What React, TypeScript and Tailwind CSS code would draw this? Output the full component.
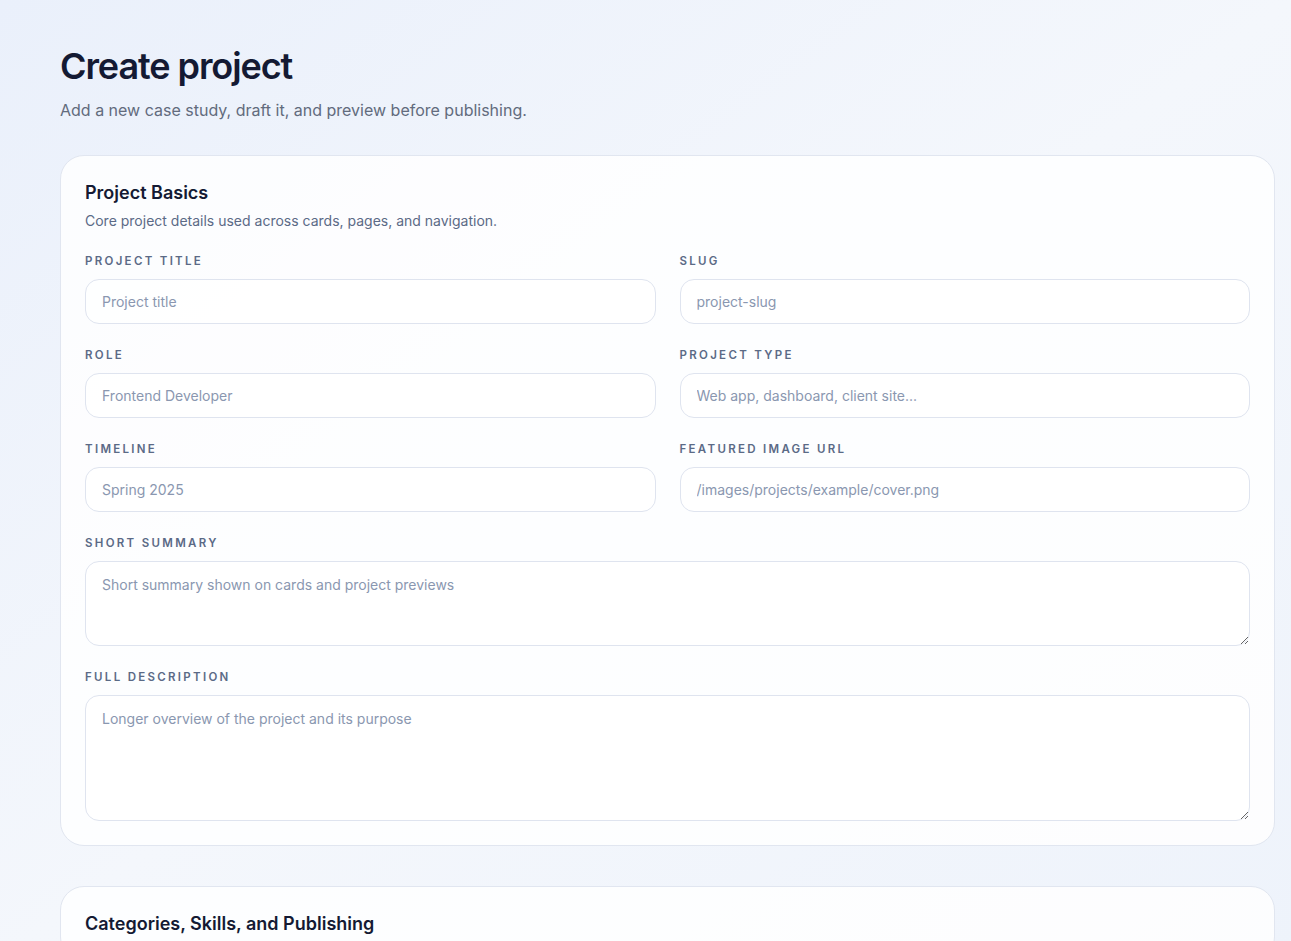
import React from 'react';

const inputCls =
    'w-full h-[45px] rounded-[14px] border border-[#dfe4ef] bg-white/80 px-4 text-[14px] text-slate-700 placeholder:text-[#8a97b0] outline-none';
const areaCls =
    'w-full rounded-[14px] border border-[#dfe4ef] bg-white/80 px-4 py-3 text-[14px] text-slate-700 placeholder:text-[#8a97b0] outline-none block';

const Field: React.FC<{ label: string; children: React.ReactNode; full?: boolean }> = ({ label, children, full }) => (
    <div className={`flex flex-col gap-[10px] ${full ? 'col-span-2' : ''}`}>
        <label className="text-[11.5px] font-semibold tracking-[0.2em] uppercase text-[#5b6a86] leading-4">{label}</label>
        {children}
    </div>
);

const App: React.FC = () => {
    return (
        <div
            className="min-h-[941px] bg-gradient-to-br from-[#eaf0fb] via-[#f4f7fc] to-[#eef3fb] pl-[60px] pr-4 pt-[44px] text-slate-900 overflow-hidden"
            style={{ fontFamily: 'Inter, "Noto Sans", sans-serif' }}
        >
            <h1 className="text-[36px] font-semibold tracking-[-0.03em] text-[#141a33] leading-[44px]">Create project</h1>
            <p className="mt-[10px] text-[16px] text-[#626b7d]">Add a new case study, draft it, and preview before publishing.</p>

            <section className="mt-[33px] rounded-[24px] border border-[#e1e6f0] bg-white/85 px-6 pt-[25px] pb-6">
                <h2 className="text-[18px] font-semibold text-[#141a33] leading-6">Project Basics</h2>
                <p className="mt-[5px] text-[14px] text-[#5b6a86]">Core project details used across cards, pages, and navigation.</p>

                <div className="mt-[22px] grid grid-cols-2 gap-x-6 gap-y-[23px]">
                    <Field label="Project title">
                        <input className={inputCls} placeholder="Project title" />
                    </Field>
                    <Field label="Slug">
                        <input className={inputCls} placeholder="project-slug" />
                    </Field>
                    <Field label="Role">
                        <input className={inputCls} placeholder="Frontend Developer" />
                    </Field>
                    <Field label="Project type">
                        <input className={inputCls} placeholder="Web app, dashboard, client site..." />
                    </Field>
                    <Field label="Timeline">
                        <input className={inputCls} placeholder="Spring 2025" />
                    </Field>
                    <Field label="Featured image URL">
                        <input className={inputCls} placeholder="/images/projects/example/cover.png" />
                    </Field>
                    <Field label="Short summary" full>
                        <textarea className={`${areaCls} h-[85px]`} placeholder="Short summary shown on cards and project previews" />
                    </Field>
                    <Field label="Full description" full>
                        <textarea className={`${areaCls} h-[126px]`} placeholder="Longer overview of the project and its purpose" />
                    </Field>
                </div>
            </section>

            <section className="mt-10 rounded-[24px] border border-[#e1e6f0] bg-white/85 px-6 pt-[25px] pb-6">
                <h2 className="text-[18px] font-semibold text-[#141a33] leading-6">Categories, Skills, and Publishing</h2>
            </section>
        </div>
    );
};

export default App;
